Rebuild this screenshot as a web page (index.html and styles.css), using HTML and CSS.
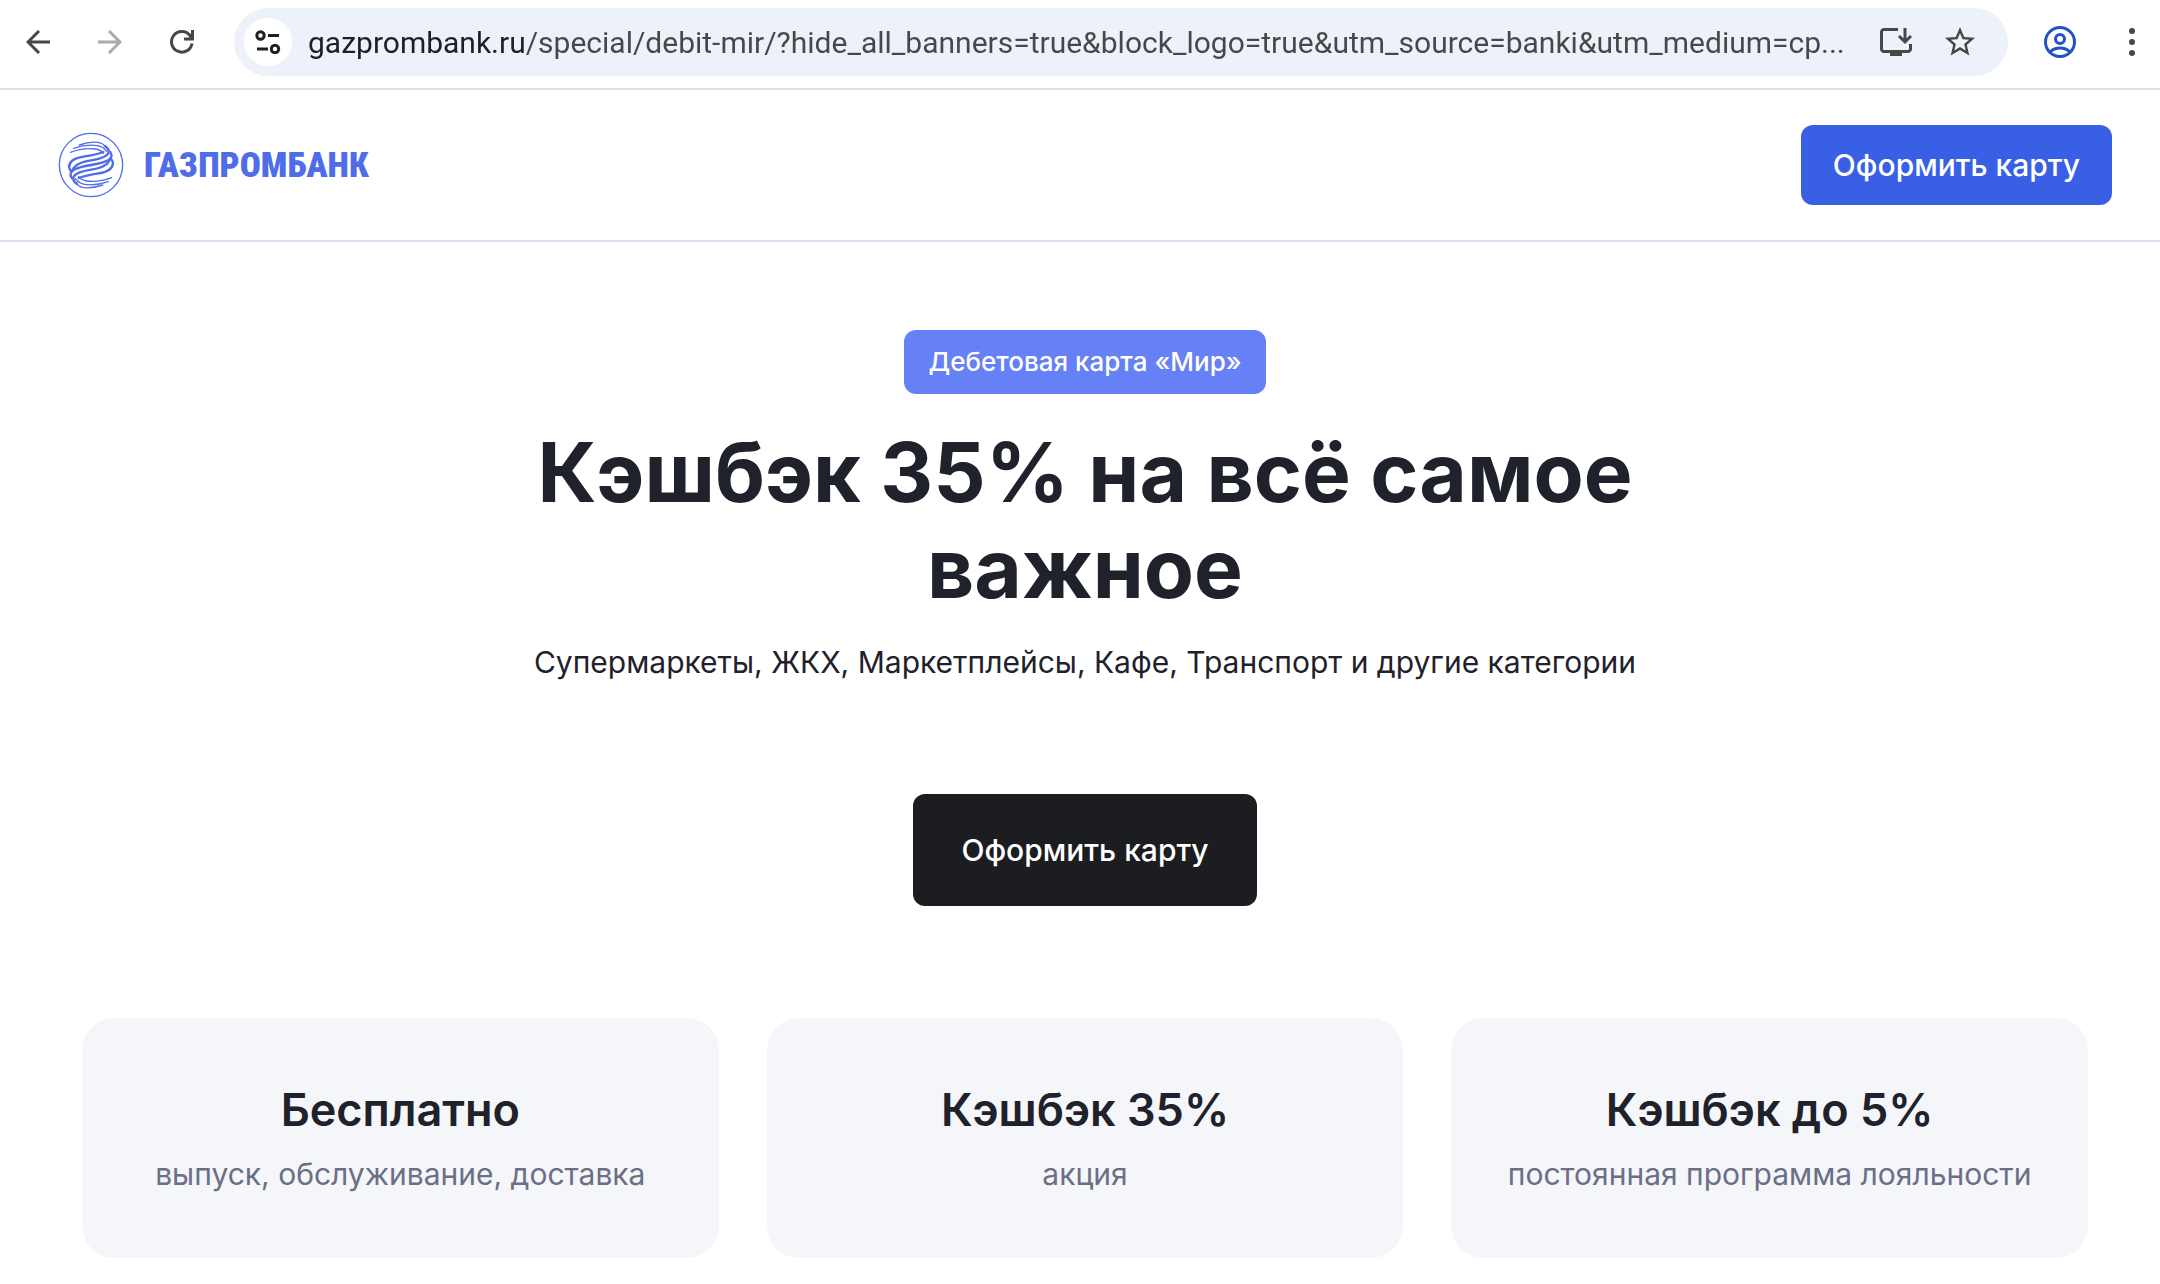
FILE: index.html
```html
<!DOCTYPE html>
<html lang="ru">
    <head>
        <meta charset="utf-8">
        <title>Дебетовая карта «Мир»</title>
        <link rel="stylesheet" href="styles.css">
    </head>
    <body>
        <div class="toolbar">
            <button class="tool" type="button" aria-label="Назад">
                <svg width="24" height="24" viewBox="0 0 24 24" fill="none" stroke="currentColor" stroke-width="3"><path d="M24 12H2M13 1L2 12l11 11"/></svg>
            </button>
            <button class="tool disabled" type="button" aria-label="Вперёд" disabled>
                <svg width="24" height="24" viewBox="0 0 24 24" fill="none" stroke="currentColor" stroke-width="3"><path d="M0 12h22M11 1l11 11-11 11"/></svg>
            </button>
            <button class="tool" type="button" aria-label="Обновить">
                <svg width="24" height="24" viewBox="0 0 24 24" fill="none" stroke="currentColor" stroke-width="3"><path d="M22 13.500A10.300 10.300 0 1 1 20 5.500L22 9M22.500 0v9H14"/></svg>
            </button>
            <form class="address">
                <button class="site-info" type="button" aria-label="Сведения о сайте">
                    <svg width="26" height="24" viewBox="0 0 26 24" fill="none" stroke="currentColor" stroke-width="3"><circle cx="5.500" cy="5.500" r="3.700"/><path d="M13 5.500h11M2 19h11"/><circle cx="20" cy="19" r="3.700"/></svg>
                </button>
                <input class="url" type="text" aria-label="Адрес" value="gazprombank.ru/special/debit-mir/?hide_all_banners=true&amp;block_logo=true&amp;utm_source=banki&amp;utm_medium=cp...">
                <button class="tool" type="button" aria-label="Установить">
                    <svg width="32" height="28" viewBox="0 0 32 28" fill="none" stroke="currentColor" stroke-width="3"><path d="M18 1.500H4A2.500 2.500 0 0 0 1.500 4v17A2.500 2.500 0 0 0 4 23.500h24a2.500 2.500 0 0 0 2.500-2.500v-5M25 0v14M19 8l6 6 6-6"/><path d="M10 24h12v4H10z" fill="currentColor" stroke="none"/></svg>
                </button>
                <button class="tool" type="button" aria-label="В закладки">
                    <svg width="36" height="36" viewBox="0 0 24 24" fill="currentColor"><path d="M22 9.240l-7.190-.620L12 2 9.190 8.630 2 9.240l5.460 4.730L5.820 21 12 17.270 18.180 21l-1.630-7.030L22 9.240zM12 15.400l-3.760 2.270 1-4.280-3.320-2.880 4.380-.380L12 6.100l1.710 4.040 4.380.380-3.320 2.880 1 4.280L12 15.400z"/></svg>
                </button>
            </form>
            <button class="tool profile" type="button" aria-label="Профиль">
                <svg width="32" height="32" viewBox="0 0 32 32" fill="none" stroke="currentColor" stroke-width="3"><circle cx="16" cy="16" r="14.500"/><circle cx="16" cy="13" r="4.500"/><path d="M6 26q4-4 10-4t10 4"/></svg>
            </button>
            <button class="tool menu" type="button" aria-label="Меню">
                <svg width="8" height="28" viewBox="0 0 8 28" fill="currentColor"><circle cx="4" cy="3" r="3"/><circle cx="4" cy="14" r="3"/><circle cx="4" cy="25" r="3"/></svg>
            </button>
        </div>

        <header class="header">
            <a class="logo" href="#">
                <svg width="66" height="66" viewBox="0 0 198 198" fill="none" stroke="currentColor" stroke-linecap="round">
                    <circle cx="99" cy="99" r="95" stroke-width="4"/>
                    <g id="half">
                        <path d="M64 39Q94 28 120 31Q138 34 142 46" stroke-width="4"/>
                        <path d="M47 49Q84 36 118 41Q136 44 146 58" stroke-width="4"/>
                        <path d="M37 61Q76 46 112 51Q128 53 136 64" stroke-width="4"/>
                        <path d="M136 60Q116 68 76 74Q35 80 33 104Q34 112 38 116" stroke-width="7"/>
                        <path d="M141 42Q156 52 151 64Q143 78 99 85Q48 93 42 118" stroke-width="7"/>
                        <path d="M157 60Q166 76 150 85Q134 93 99 99" stroke-width="7"/>
                    </g>
                    <use href="#half" transform="rotate(180 99 99)"/>
                </svg>
                <span class="logo-text">ГАЗПРОМБАНК</span>
            </a>
            <a class="btn" href="#">Оформить карту</a>
        </header>

        <main class="main">
            <section class="hero">
                <div class="badge">Дебетовая карта «Мир»</div>
                <h1>Кэшбэк 35% на всё самое важное</h1>
                <p class="subtitle">Супермаркеты, ЖКХ, Маркетплейсы, Кафе, Транспорт и другие категории</p>
                <a class="btn btn-dark" href="#">Оформить карту</a>
            </section>

            <section class="cards">
                <div class="card">
                    <h2>Бесплатно</h2>
                    <p>выпуск, обслуживание, доставка</p>
                </div>
                <div class="card">
                    <h2>Кэшбэк 35%</h2>
                    <p>акция</p>
                </div>
                <div class="card">
                    <h2>Кэшбэк до 5%</h2>
                    <p>постоянная программа лояльности</p>
                </div>
            </section>
        </main>
    </body>
</html>
```
FILE: styles.css
```css
* {
    box-sizing: border-box;
}
body {
    margin: 0;
    background: #fff;
    color: #1f212b;
    font-family: Inter, Roboto, sans-serif;
}
h1, h2, p {
    margin: 0;
}
a {
    text-decoration: none;
}
button {
    padding: 0;
    border: none;
    background: none;
    color: inherit;
    cursor: pointer;
}
svg {
    display: block;
}

/* browser toolbar */
.toolbar {
    display: flex;
    align-items: center;
    gap: 24px;
    height: 90px;
    padding: 0 4px 4px 14px;
    border-bottom: 2px solid #e0e0e0;
    color: #474747;
}
.tool {
    display: flex;
    align-items: center;
    justify-content: center;
    width: 48px;
    height: 48px;
    flex: none;
}
.disabled {
    color: #aaa;
}
.address {
    display: flex;
    align-items: center;
    gap: 16px;
    flex: 1;
    min-width: 0;
    height: 68px;
    margin-left: 4px;
    padding: 0 24px 0 10px;
    border-radius: 34px;
    background: #edf2fa;
}
.site-info {
    display: flex;
    align-items: center;
    justify-content: center;
    width: 48px;
    height: 48px;
    flex: none;
    border-radius: 50%;
    background: #fff;
    color: #1f1f1f;
}
/* host part is darker than the rest of the address */
.url {
    flex: 1;
    min-width: 0;
    height: 48px;
    padding: 0;
    border: none;
    background: linear-gradient(to right, #1f1f1f 217px, #474747 217px);
    -webkit-background-clip: text;
    background-clip: text;
    color: transparent;
    font-family: Roboto, sans-serif;
    font-size: 30px;
}
.profile {
    margin-left: 4px;
    color: #1f51c9;
}

/* site header */
.header {
    display: flex;
    align-items: center;
    justify-content: space-between;
    height: 152px;
    padding: 0 48px 0 58px;
    border-bottom: 2px solid #dadeee;
}
.logo {
    display: flex;
    align-items: center;
    gap: 20px;
    color: #4f6de9;
}
.logo-text {
    font-family: "Roboto Condensed", "Liberation Sans Narrow", sans-serif;
    font-size: 35px;
    font-weight: 900;
}
.btn {
    display: flex;
    align-items: center;
    justify-content: center;
    height: 80px;
    padding: 0 32px;
    border-radius: 12px;
    background: #3960e4;
    color: #fff;
    font-size: 30px;
    font-weight: 500;
}
.btn-dark {
    height: 112px;
    padding: 0 48px;
    background: #1c1d21;
}

/* content */
.main {
    padding: 88px 72px 24px 82px;
}
.hero {
    display: flex;
    flex-direction: column;
    align-items: center;
    text-align: center;
}
.badge {
    padding: 0 24px;
    border-radius: 12px;
    background: #6680f6;
    color: #fff;
    font-size: 26px;
    font-weight: 500;
    line-height: 64px;
}
h1 {
    max-width: 1200px;
    margin-top: 31px;
    font-size: 82px;
    font-weight: 700;
    line-height: 96px;
}
.subtitle {
    margin: 23px 0 110px;
    font-size: 30px;
    line-height: 44px;
}
.cards {
    display: grid;
    grid-template-columns: repeat(3, 1fr);
    gap: 48px;
    margin-top: 112px;
}
.card {
    padding: 64px 24px;
    border-radius: 32px;
    background: #f4f6fa;
    text-align: center;
}
.card h2 {
    margin-bottom: 16px;
    font-size: 45px;
    font-weight: 600;
    line-height: 56px;
}
.card p {
    color: #6b6f85;
    font-size: 30px;
    line-height: 40px;
}
```
